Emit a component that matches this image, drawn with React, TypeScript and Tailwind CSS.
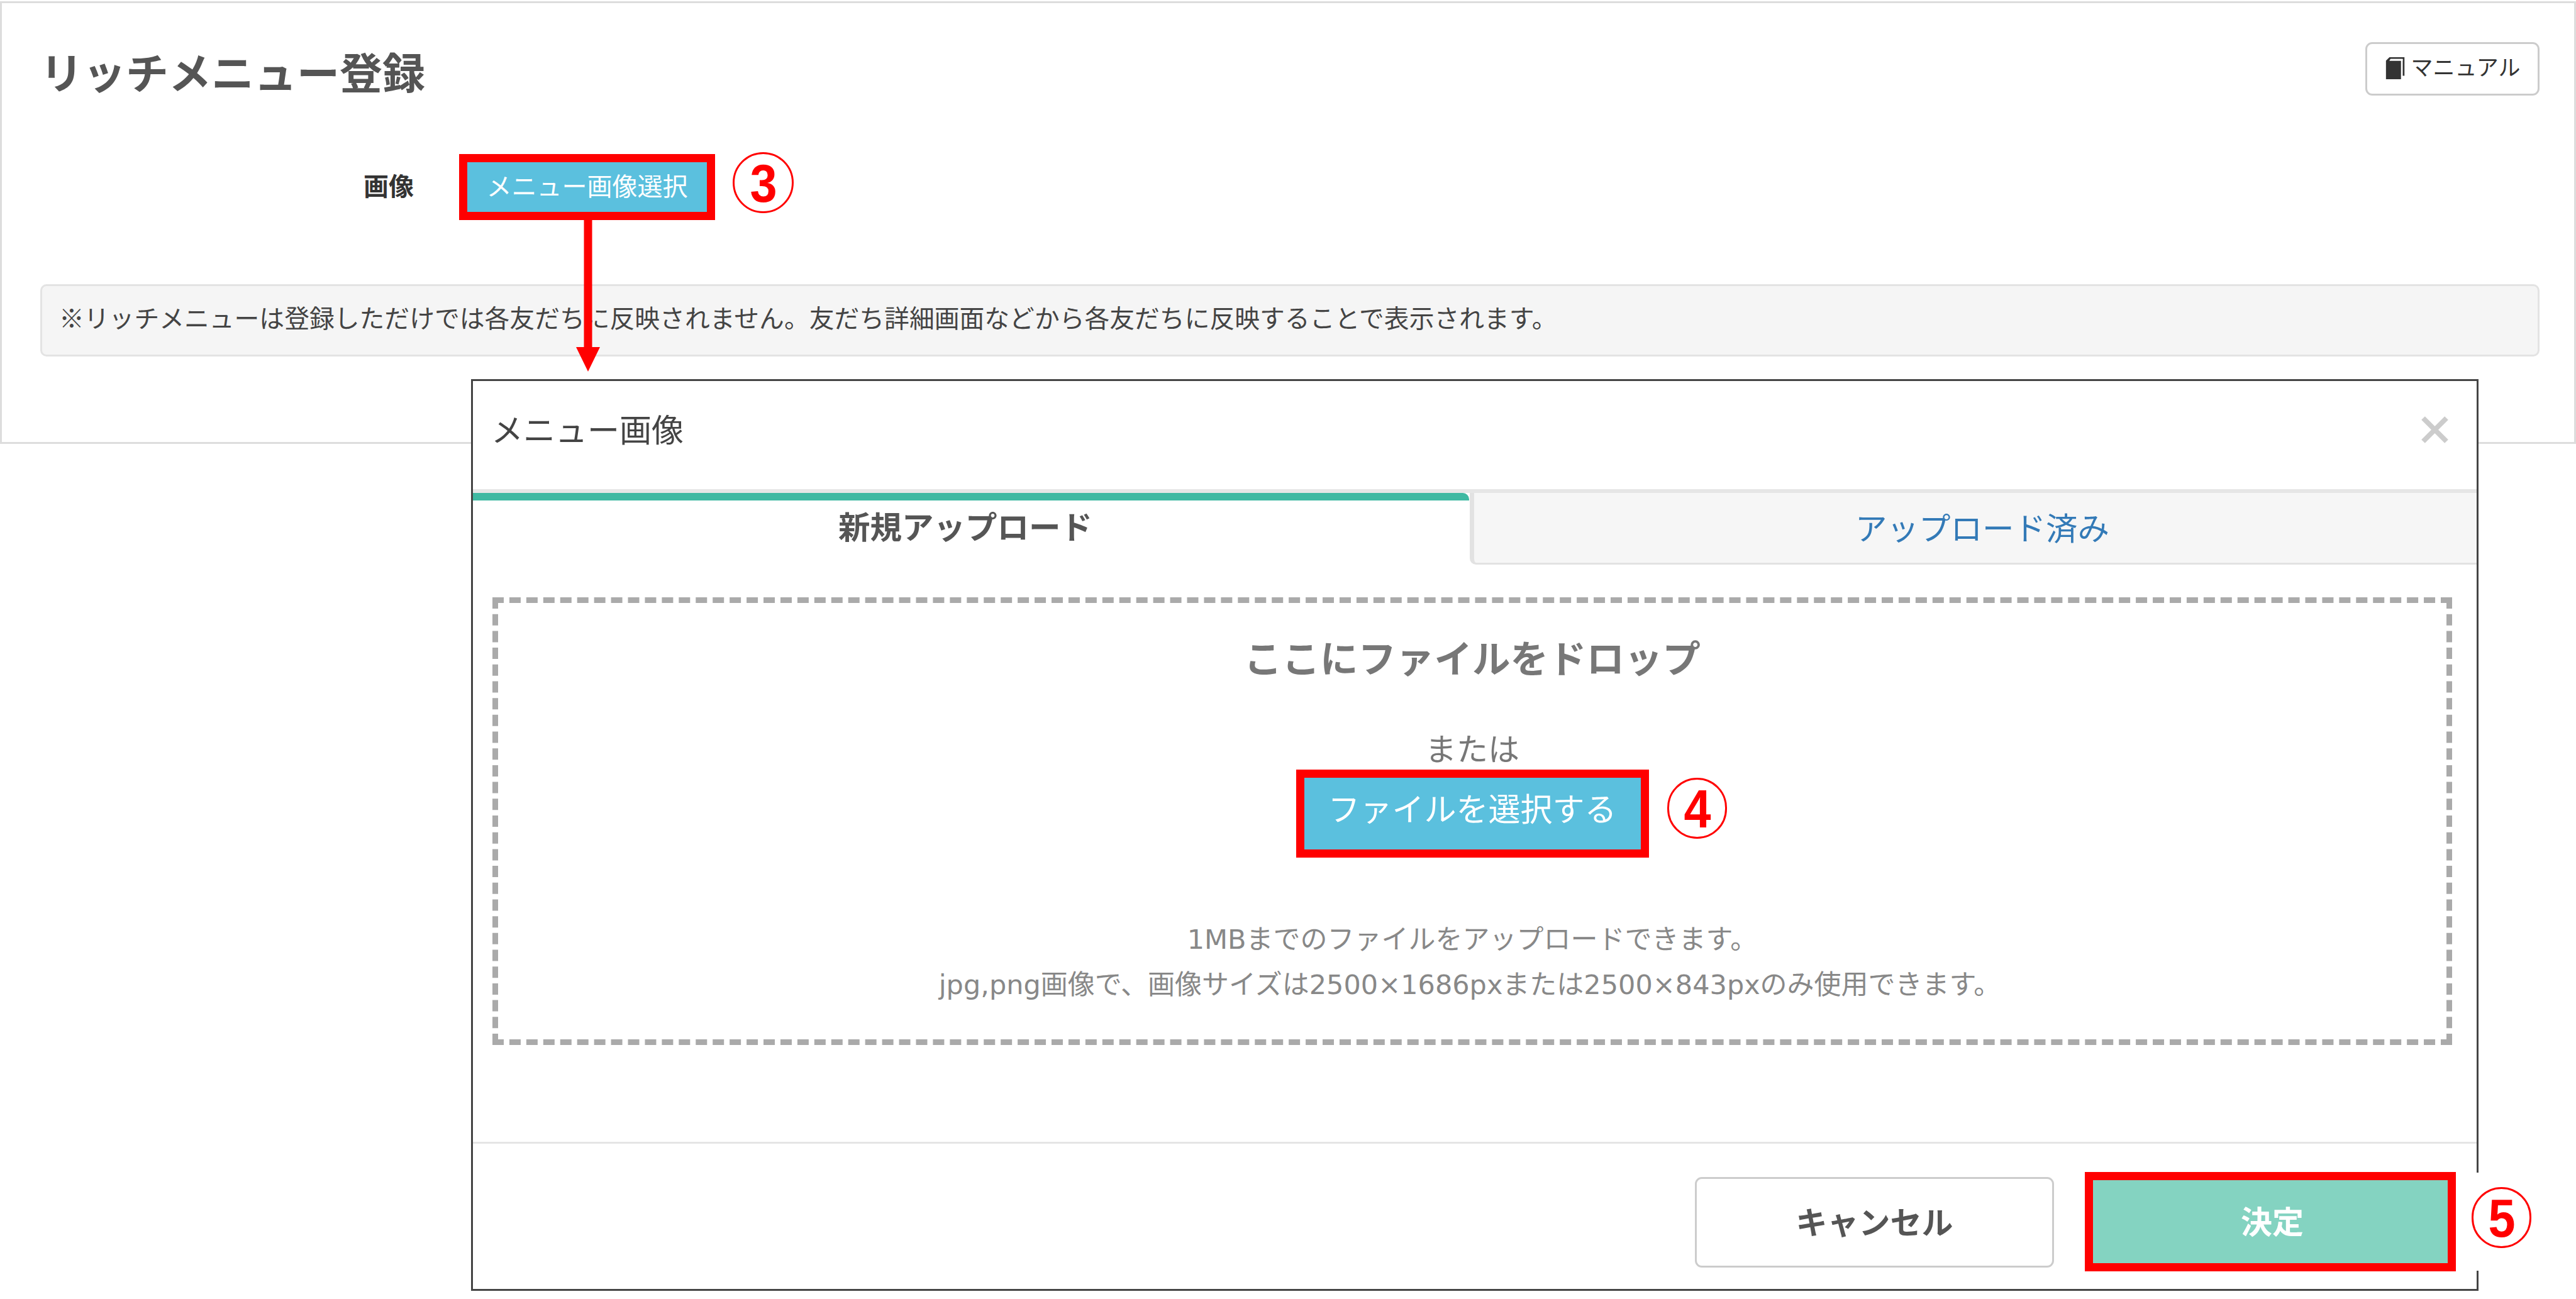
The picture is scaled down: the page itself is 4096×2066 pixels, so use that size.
const fontStack = "font-['Open_Sans','Noto_Sans_CJK_JP',sans-serif]"

function StepMark({ n, className }: { n: number; className: string }) {
  return (
    <span
      className={`absolute flex items-center justify-center rounded-full border-[3px] border-[#ff0000] bg-white font-['Liberation_Sans',sans-serif] text-[86px] leading-none font-bold text-[#ff0000] ${className}`}
    >
      <span className="scale-x-[0.9]">{n}</span>
    </span>
  )
}

function BookIcon() {
  return (
    <svg viewBox="0 0 37 39" className="h-[36px] w-[34px] shrink-0">
      <path d="M2 39V7l6-6h26v32h-3V4H10L8 7h20v32z" fill="#333" />
      <path d="M10 4h21v3H8z" fill="#fff" />
    </svg>
  )
}

function CloseIcon() {
  return (
    <svg viewBox="0 0 45 45" className="h-[45px] w-[45px]">
      <path d="M4 4l37 37M41 4L4 41" stroke="#cccccc" strokeWidth="8" fill="none" />
    </svg>
  )
}

function ArrowDown() {
  return (
    <svg viewBox="0 0 38 241" className="absolute left-[916px] top-[350px] h-[241px] w-[38px]">
      <path d="M12.5 0h13v202h12.5L19 241 0 202h12.5z" fill="#ff0000" />
    </svg>
  )
}

function MainPanel() {
  return (
    <section className="mt-[2px] h-[704px] w-full border-[3px] border-[#dddddd] bg-white pl-[61px] pr-[55px] pt-[62px]">
      <div className="flex h-[85px] items-start justify-between">
        <h1 className="pt-[6px] text-[68px] leading-[85px] font-bold text-[#555555]">
          リッチメニュー登録
        </h1>
        <button className="flex h-[85px] w-[277px] items-center justify-center gap-[8px] rounded-[11px] border-[3px] border-[#cccccc] bg-white pb-[4px] text-[35px] text-[#333333]">
          <BookIcon />
          マニュアル
        </button>
      </div>

      <div className="mt-[93px] flex items-center">
        <div className="w-[594px] pb-[4px] text-right text-[40px] font-bold text-[#333333]">画像</div>
        <button className="ml-[72px] flex h-[105px] w-[407px] items-center justify-center border-[13px] border-[#ff0000] bg-[#5bc0de] pb-[4px] text-[40px] text-white">
          メニュー画像選択
        </button>
      </div>

      <div className="mt-[102px] flex h-[115px] items-center rounded-[10px] border-[3px] border-[#e3e3e3] bg-[#f5f5f5] pb-[8px] pl-[27px] text-[39.8px] text-[#444444]">
        ※リッチメニューは登録しただけでは各友だちに反映されません。友だち詳細画面などから各友だちに反映することで表示されます。
      </div>
    </section>
  )
}

function UploadModal() {
  return (
    <div className="absolute left-[749px] top-[603px] flex h-[1450px] w-[3192px] flex-col border-[3px] border-[#444444] bg-white">
      <div className="flex h-[172px] shrink-0 items-center justify-between pb-[18px] pl-[29px] pr-[44px]">
        <h2 className="text-[51px] font-normal text-[#444444]">メニュー画像</h2>
        <CloseIcon />
      </div>

      <div className="flex h-[120px] shrink-0 border-t-[6px] border-[#e6e6e6]">
        <div className="flex w-[1584px] items-center justify-center rounded-tr-[10px] border-t-[12px] border-[#3fb9a2] pb-[18px] pr-[18px] text-[50.5px] font-bold text-[#555555]">
          新規アップロード
        </div>
        <div className="ml-[1px] flex flex-1 items-center justify-center rounded-bl-[10px] border-b-[3px] border-l-[7px] border-[#e2e2e2] bg-[#f6f6f6] pl-[22px] text-[50.5px] text-[#337ab7]">
          アップロード済み
        </div>
      </div>

      <div className="flex-1 pl-[31px] pr-[39px] pt-[52px]">
        <div className="flex h-[712px] flex-col items-center border-[9px] border-dashed border-[#aaaaaa] pt-[48px] text-[#777777]">
          <p className="text-[60.5px] leading-[80px] font-bold">ここにファイルをドロップ</p>
          <p className="mt-[71px] text-[50px] leading-[66px]">または</p>
          <button className="flex h-[140px] w-[561px] items-center justify-center border-[13px] border-[#ff0000] bg-[#5bc0de] pb-[16px] text-[51px] text-white">
            ファイルを選択する
          </button>
          <div className="mt-[94px] text-center font-['DejaVu_Sans','Noto_Sans_CJK_JP',sans-serif] text-[43px] leading-[72px] text-[#888888]">
            <p>1MBまでのファイルをアップロードできます。</p>
            <p className="pr-[8px]">jpg,png画像で、画像サイズは2500×1686pxまたは2500×843pxのみ使用できます。</p>
          </div>
        </div>
      </div>

      <div className="flex h-[234px] shrink-0 items-start justify-end gap-[49px] border-t-[3px] border-[#e5e5e5] pr-[33px] pt-[45px]">
        <button className="mt-[8px] h-[144px] w-[571px] rounded-[11px] border-[3px] border-[#cccccc] bg-white text-[50px] font-bold text-[#555555]">
          キャンセル
        </button>
        <button className="h-[158px] w-[590px] border-[13px] border-[#ff0000] bg-[#84d3c1] pl-[6px] text-[50px] font-bold text-white">
          決定
        </button>
      </div>
    </div>
  )
}

export default function App() {
  return (
    <div className={`relative h-[2066px] w-[4096px] overflow-hidden bg-white ${fontStack}`}>
      <MainPanel />
      <ArrowDown />
      <UploadModal />
      <StepMark n={3} className="left-[1165px] top-[242px] h-[97px] w-[97px]" />
      <StepMark n={4} className="left-[2651px] top-[1237px] h-[97px] w-[95px]" />
      <div className="absolute left-[3905px] top-[1865px] h-[156px] w-[130px] bg-white" />
      <StepMark n={5} className="left-[3930px] top-[1888px] h-[97px] w-[95px]" />
    </div>
  )
}
